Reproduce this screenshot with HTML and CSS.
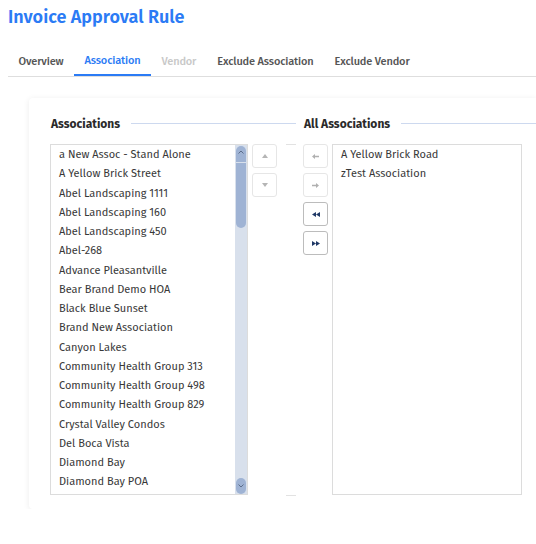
FILE: index.html
```html
<!DOCTYPE html>
<html lang="en">

<head>
    <meta charset="UTF-8">
    <meta name="viewport" content="width=device-width, initial-scale=1.0">
    <title>Invoice Approval Rule</title>
    <link rel="stylesheet" href="styles.css">
</head>

<body>
    <div class="page">
        <h1 class="title">Invoice Approval Rule</h1>

        <div class="tabs">
            <a class="tab">Overview</a>
            <a class="tab active">Association</a>
            <a class="tab disabled">Vendor</a>
            <a class="tab">Exclude Association</a>
            <a class="tab">Exclude Vendor</a>
        </div>

        <div class="card">
            <div class="picker">
                <div class="column left">
                    <div class="col-head">
                        <h3>Associations</h3>
                        <span class="rule"></span>
                    </div>
                    <div class="col-body">
                        <div class="listbox">
                            <ul class="items">
                                <li>a New Assoc - Stand Alone</li>
                                <li>A Yellow Brick Street</li>
                                <li>Abel Landscaping 1111</li>
                                <li>Abel Landscaping 160</li>
                                <li>Abel Landscaping 450</li>
                                <li>Abel-268</li>
                                <li>Advance Pleasantville</li>
                                <li>Bear Brand Demo HOA</li>
                                <li>Black Blue Sunset</li>
                                <li>Brand New Association</li>
                                <li>Canyon Lakes</li>
                                <li>Community Health Group 313</li>
                                <li>Community Health Group 498</li>
                                <li>Community Health Group 829</li>
                                <li>Crystal Valley Condos</li>
                                <li>Del Boca Vista</li>
                                <li>Diamond Bay</li>
                                <li>Diamond Bay POA</li>
                            </ul>
                            <div class="scrollbar">
                                <div class="sb-btn up">
                                    <svg width="6" height="4" viewBox="0 0 6 4"><path d="M0.5 3.5 L3 1 L5.5 3.5" fill="none" stroke="#4a5a78" stroke-width="0.8"/></svg>
                                </div>
                                <div class="sb-thumb"></div>
                                <div class="sb-track"></div>
                                <div class="sb-btn down">
                                    <svg width="6" height="4" viewBox="0 0 6 4"><path d="M0.5 0.5 L3 3 L5.5 0.5" fill="none" stroke="#4a5a78" stroke-width="0.8"/></svg>
                                </div>
                            </div>
                        </div>
                        <div class="btn-stack">
                            <button class="mini" disabled>
                                <svg width="6" height="4" viewBox="0 0 6 4"><path d="M0 4 L3 0 L6 4 Z" fill="#b5b5b5"/></svg>
                            </button>
                            <button class="mini" disabled>
                                <svg width="6" height="4" viewBox="0 0 6 4"><path d="M0 0 L6 0 L3 4 Z" fill="#b5b5b5"/></svg>
                            </button>
                        </div>
                        <div class="gutter"></div>
                    </div>
                </div>

                <div class="column right">
                    <div class="col-head">
                        <h3>All Associations</h3>
                        <span class="rule"></span>
                    </div>
                    <div class="col-body">
                        <div class="btn-stack">
                            <button class="mini" disabled>
                                <svg width="7" height="5" viewBox="0 0 7 5"><path d="M0 2.5 L3 0 L3 1.8 L7 1.8 L7 3.2 L3 3.2 L3 5 Z" fill="#b0b0b0"/></svg>
                            </button>
                            <button class="mini" disabled>
                                <svg width="7" height="5" viewBox="0 0 7 5"><path d="M7 2.5 L4 0 L4 1.8 L0 1.8 L0 3.2 L4 3.2 L4 5 Z" fill="#b0b0b0"/></svg>
                            </button>
                            <button class="mini on">
                                <svg width="8" height="5" viewBox="0 0 8 5"><path d="M0 2.5 L4 0 L4 5 Z M4 2.5 L8 0 L8 5 Z" fill="#1f3866"/></svg>
                            </button>
                            <button class="mini on">
                                <svg width="8" height="5" viewBox="0 0 8 5"><path d="M8 2.5 L4 0 L4 5 Z M4 2.5 L0 0 L0 5 Z" fill="#1f3866"/></svg>
                            </button>
                        </div>
                        <div class="listbox plain">
                            <ul class="items">
                                <li>A Yellow Brick Road</li>
                                <li>zTest Association</li>
                            </ul>
                        </div>
                    </div>
                </div>
            </div>
        </div>
    </div>
</body>

</html>
```

FILE: styles.css
```css
*{
    box-sizing: border-box;
    padding: 0;
    margin: 0;
}

html, body{
    overflow: hidden;
    background-color: #fff;
}

body{
    font-family: "Fira Sans", "Noto Sans", "Liberation Sans", sans-serif;
    color: #333;
}

.page{
    padding: 4px 0 0 8px;
    width: 536px;
}

.title{
    font-size: 18px;
    font-weight: 600;
    color: #2b7bf5;
    line-height: 27px;
}

.tabs{
    display: flex;
    margin-top: 18px;
    border-bottom: 1px solid #dedede;
    height: 28px;
}

.tab{
    padding: 0 10.5px;
    font-size: 11px;
    font-weight: 500;
    letter-spacing: -0.15px;
    color: #555;
    line-height: 26px;
    cursor: pointer;
}

.tab.active{
    color: #2b7bf5;
    border-bottom: 2px solid #2b7bf5;
    line-height: 24px;
}

.tab.disabled{
    color: #c8c8c8;
}

.card{
    margin: 21px 0 0 21px;
    width: 507px;
    height: 411px;
    padding: 13px 0 13px 21px;
    background-color: #fff;
    border-radius: 4px 0 0 4px;
    box-shadow: rgba(0, 0, 0, 0.08) 0px 1px 6px;
}

.picker{
    display: flex;
    gap: 7px;
}

.col-head{
    display: flex;
    align-items: center;
    height: 25px;
    margin-bottom: 8px;
}

.col-head h3{
    font-size: 12px;
    font-weight: 700;
    color: #2a2a2a;
    padding-left: 1px;
    padding-right: 11px;
}

.rule{
    flex: 1;
    height: 1px;
    background-color: #cdd9ef;
}

.left{
    width: 246px;
}

.right{
    flex: 1;
}

.col-body{
    display: flex;
    gap: 4px;
    height: 352px;
}

.listbox{
    display: flex;
    width: 198px;
    height: 351px;
    border: 1px solid #dcdcdc;
    overflow: hidden;
}

.listbox.plain{
    width: 190px;
}

.items{
    list-style: none;
    flex: 1;
    padding-left: 8px;
    overflow: hidden;
}

.items li{
    font-size: 11px;
    height: 19.25px;
    line-height: 19px;
    white-space: nowrap;
    color: #383838;
}

.scrollbar{
    width: 12px;
    display: flex;
    flex-direction: column;
    align-items: center;
    background-color: #d8e0ec;
}

.sb-btn{
    width: 10px;
    height: 16px;
    background-color: #9fb3d4;
    display: flex;
    justify-content: center;
}

.sb-btn.up{
    border-radius: 5px 5px 0 0;
    margin-top: 1px;
    align-items: flex-start;
    padding-top: 4px;
}

.sb-btn.down{
    border-radius: 5px;
    align-items: center;
}

.sb-thumb{
    width: 10px;
    height: 65px;
    background-color: #9fb3d4;
    border-radius: 0 0 5px 5px;
    margin-top: 1px;
}

.sb-track{
    flex: 1;
}

.btn-stack{
    display: flex;
    flex-direction: column;
    gap: 5px;
}

button.mini{
    width: 25px;
    height: 24px;
    display: flex;
    align-items: center;
    justify-content: center;
    background-color: #fff;
    border: 1px solid #e6e6e6;
    border-radius: 3px;
}

button.mini.on{
    border-color: #bcbcbc;
}

button:hover{
    cursor: pointer;
}

.gutter{
    width: 10px;
    margin-left: 5px;
    height: 352px;
    border-top: 1px solid #e2e2e2;
    border-bottom: 1px solid #e2e2e2;
}
```
